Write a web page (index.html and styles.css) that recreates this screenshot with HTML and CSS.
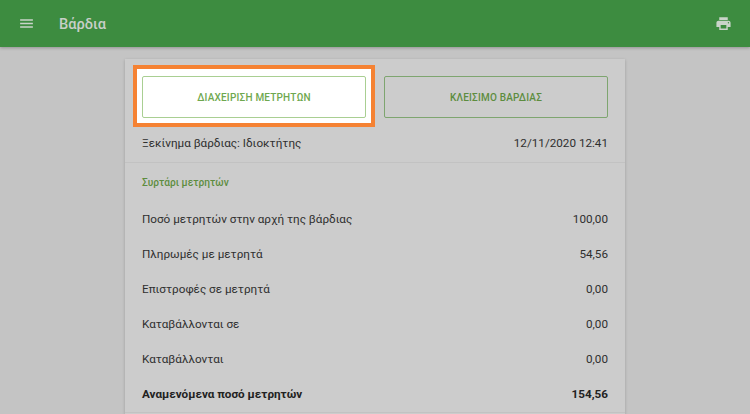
FILE: index.html
```html
<!DOCTYPE html>
<html lang="el">
<head>
<meta charset="utf-8">
<title>Βάρδια</title>
<link rel="stylesheet" href="styles.css">
</head>
<body>
<header class="appbar">
  <svg class="icon menu-icon" viewBox="0 0 24 24"><path d="M3 18h18v-2H3v2zm0-5h18v-2H3v2zm0-7v2h18V6H3z"/></svg>
  <h1 class="title">Βάρδια</h1>
  <svg class="icon print-icon" viewBox="0 0 24 24"><path d="M19 8H5c-1.66 0-3 1.34-3 3v6h4v4h12v-4h4v-6c0-1.66-1.34-3-3-3zm-3 11H8v-5h8v5zm3-7c-.55 0-1-.45-1-1s.45-1 1-1 1 .45 1 1-.45 1-1 1zm-1-9H6v4h12V3z"/></svg>
</header>
<main class="content">
  <section class="card">
    <div class="actions">
      <div class="spot"><button class="btn btn-lit">ΔΙΑΧΕΙΡΙΣΗ ΜΕΤΡΗΤΩΝ</button></div>
      <button class="btn">ΚΛΕΙΣΙΜΟ ΒΑΡΔΙΑΣ</button>
    </div>
    <div class="start">
      <span>Ξεκίνημα βάρδιας: Ιδιοκτήτης</span>
      <span>12/11/2020 12:41</span>
    </div>
    <div class="drawer">
      <h2 class="section-title">Συρτάρι μετρητών</h2>
      <div class="row"><span>Ποσό μετρητών στην αρχή της βάρδιας</span><span>100,00</span></div>
      <div class="row"><span>Πληρωμές με μετρητά</span><span>54,56</span></div>
      <div class="row"><span>Επιστροφές σε μετρητά</span><span>0,00</span></div>
      <div class="row"><span>Καταβάλλονται σε</span><span>0,00</span></div>
      <div class="row"><span>Καταβάλλονται</span><span>0,00</span></div>
      <div class="row row-total"><span>Αναμενόμενα ποσό μετρητών</span><span>154,56</span></div>
    </div>
  </section>
</main>
</body>
</html>
```
FILE: styles.css
```css
* { box-sizing: border-box; }
html, body { margin: 0; height: 100%; overflow: hidden; }
body {
  display: flex;
  flex-direction: column;
  background: #c4c4c4;
  font-family: Roboto, "Noto Sans", sans-serif;
  color: #2f2f2f;
  font-size: 11.7px;
}
.appbar {
  flex: none;
  height: 47px;
  background: #3d8c40;
  display: flex;
  align-items: center;
  padding: 0 18px 0 18px;
  box-shadow: 0 1px 3px rgba(0,0,0,.25);
  position: relative;
}
.icon { width: 17px; height: 17px; fill: #c9d4c9; display: block; }
.print-icon { margin-left: auto; }
.title {
  margin: 1px 0 0 24px;
  font-size: 14.6px;
  font-weight: 500;
  color: #c8cfc8;
}
.content {
  flex: 1;
  min-height: 0;
  display: flex;
  justify-content: center;
  padding-top: 12px;
}
.card {
  width: 500px;
  background: #cccccc;
  box-shadow: 0 1px 3px rgba(0,0,0,.2);
  padding: 17px 0 0;
}
.actions { display: flex; gap: 18px; padding: 0 17px; }
.spot { position: relative; width: 224px; }
.spot::before {
  content: "";
  position: absolute;
  inset: -11px -9px -9px;
  background: #fff;
  border: 4px solid #f58233;
}
.btn {
  position: relative;
  display: block;
  width: 224px;
  height: 42px;
  border: 1px solid #7ea56f;
  border-radius: 2px;
  background: transparent;
  color: #5d8c3f;
  font: 500 10px Roboto, sans-serif;
  letter-spacing: .2px;
  padding: 0;
}
.btn-lit { background: #fff; border-color: #a9cf92; color: #6fa84f; width: 100%; }
.start {
  display: flex;
  justify-content: space-between;
  align-items: center;
  height: 40px;
  margin-top: 5px;
  padding: 0 17px;
  border-bottom: 1px solid #c2c2c2;
}
.drawer { padding: 0 17px; border-bottom: 1px solid #c2c2c2; }
.section-title {
  margin: 0;
  height: 38px;
  line-height: 40px;
  font-size: 10.2px;
  font-weight: 500;
  color: #5d8c3f;
}
.row {
  display: flex;
  justify-content: space-between;
  align-items: center;
  height: 35.1px;
}
.row-total { font-weight: 700; color: #222; }
```
